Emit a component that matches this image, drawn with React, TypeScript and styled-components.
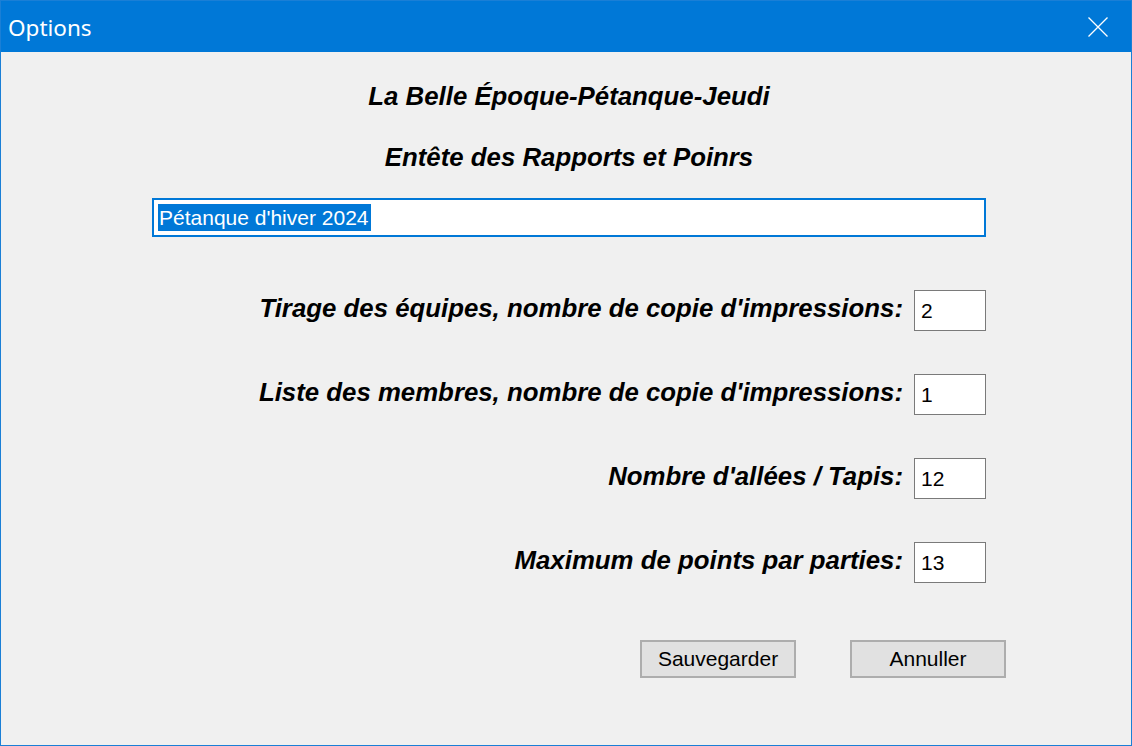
import React from "react";
import styled, { createGlobalStyle } from "styled-components";

const GlobalStyle = createGlobalStyle`
  html, body {
    margin: 0;
    padding: 0;
    background: #f0f0f0;
  }
  * {
    box-sizing: border-box;
  }
`;

const Window = styled.div`
  width: 1132px;
  height: 746px;
  border: 1px solid #1a7fd6;
  background: #f0f0f0;
  display: flex;
  flex-direction: column;
  overflow: hidden;
`;

const TitleBar = styled.div`
  height: 51px;
  background: #0078d7;
  display: flex;
  align-items: center;
  justify-content: space-between;
  padding: 0 23px 0 7px;
`;

const Title = styled.span`
  color: #ffffff;
  font-family: "Noto Sans", "Open Sans", sans-serif;
  font-size: 22.5px;
  line-height: 1;
  margin-top: 3px;
`;

const CloseIcon = styled.svg`
  width: 20px;
  height: 20px;
  display: block;
`;

const Content = styled.div`
  flex: 1;
  display: flex;
  flex-direction: column;
  padding-top: 29px;
`;

const Heading = styled.div<{ $gap?: number }>`
  text-align: center;
  font-family: "Liberation Sans", Arial, sans-serif;
  font-weight: bold;
  font-style: italic;
  font-size: 25.8px;
  line-height: 30px;
  height: 30px;
  color: #000;
  margin-top: ${({ $gap }) => $gap ?? 0}px;
  padding-left: 6px;
`;

const Form = styled.div`
  margin-left: 151px;
  width: 834px;
  display: flex;
  flex-direction: column;
`;

const TitleBox = styled.div`
  margin-top: 26px;
  height: 39px;
  border: 2px solid #0078d7;
  background: #ffffff;
  display: flex;
  align-items: center;
  padding-left: 4px;
`;

const Selected = styled.span`
  background: #0078d7;
  color: #ffffff;
  font-family: "Liberation Sans", Arial, sans-serif;
  font-size: 21px;
  line-height: 27px;
  padding: 0 2px 0 1px;
`;

const Row = styled.div<{ $gap: number }>`
  margin-top: ${({ $gap }) => $gap}px;
  display: flex;
  justify-content: flex-end;
  align-items: center;
  gap: 11px;
`;

const Label = styled.span`
  font-family: "Liberation Sans", Arial, sans-serif;
  font-weight: bold;
  font-style: italic;
  font-size: 25.8px;
  line-height: 30px;
  color: #000;
  margin-top: -5px;
`;

const NumberBox = styled.div`
  width: 72px;
  height: 41px;
  border: 1px solid #7a7a7a;
  background: #ffffff;
  display: flex;
  align-items: center;
  padding-left: 6px;
  font-family: "Liberation Sans", Arial, sans-serif;
  font-size: 21px;
  color: #000;
`;

const ButtonRow = styled.div`
  margin-top: 57px;
  margin-left: 488px;
  display: flex;
  gap: 54px;
`;

const Button = styled.button`
  flex-shrink: 0;
  width: 156px;
  height: 38px;
  border: 2px solid #adadad;
  background: #e1e1e1;
  font-family: "Liberation Sans", Arial, sans-serif;
  font-size: 21px;
  color: #000;
  padding: 0;
`;

const rows = [
  { label: "Tirage des équipes, nombre de copie d'impressions:", value: "2" },
  { label: "Liste des membres, nombre de copie d'impressions:", value: "1" },
  { label: "Nombre d'allées / Tapis:", value: "12" },
  { label: "Maximum de points par parties:", value: "13" },
];

export default function App() {
  return (
    <>
      <GlobalStyle />
      <Window>
        <TitleBar>
          <Title>Options</Title>
          <CloseIcon viewBox="0 0 20 20">
            <path d="M0.5 0.5 L19.5 19.5 M19.5 0.5 L0.5 19.5" stroke="#fff" strokeWidth="1.3" fill="none" />
          </CloseIcon>
        </TitleBar>
        <Content>
          <Heading>La Belle Époque-Pétanque-Jeudi</Heading>
          <Heading $gap={31}>Entête des Rapports et Poinrs</Heading>
          <Form>
            <TitleBox>
              <Selected>Pétanque d'hiver 2024</Selected>
            </TitleBox>
            {rows.map((r, i) => (
              <Row key={r.label} $gap={i === 0 ? 53 : 43}>
                <Label>{r.label}</Label>
                <NumberBox>{r.value}</NumberBox>
              </Row>
            ))}
            <ButtonRow>
              <Button>Sauvegarder</Button>
              <Button>Annuller</Button>
            </ButtonRow>
          </Form>
        </Content>
      </Window>
    </>
  );
}
